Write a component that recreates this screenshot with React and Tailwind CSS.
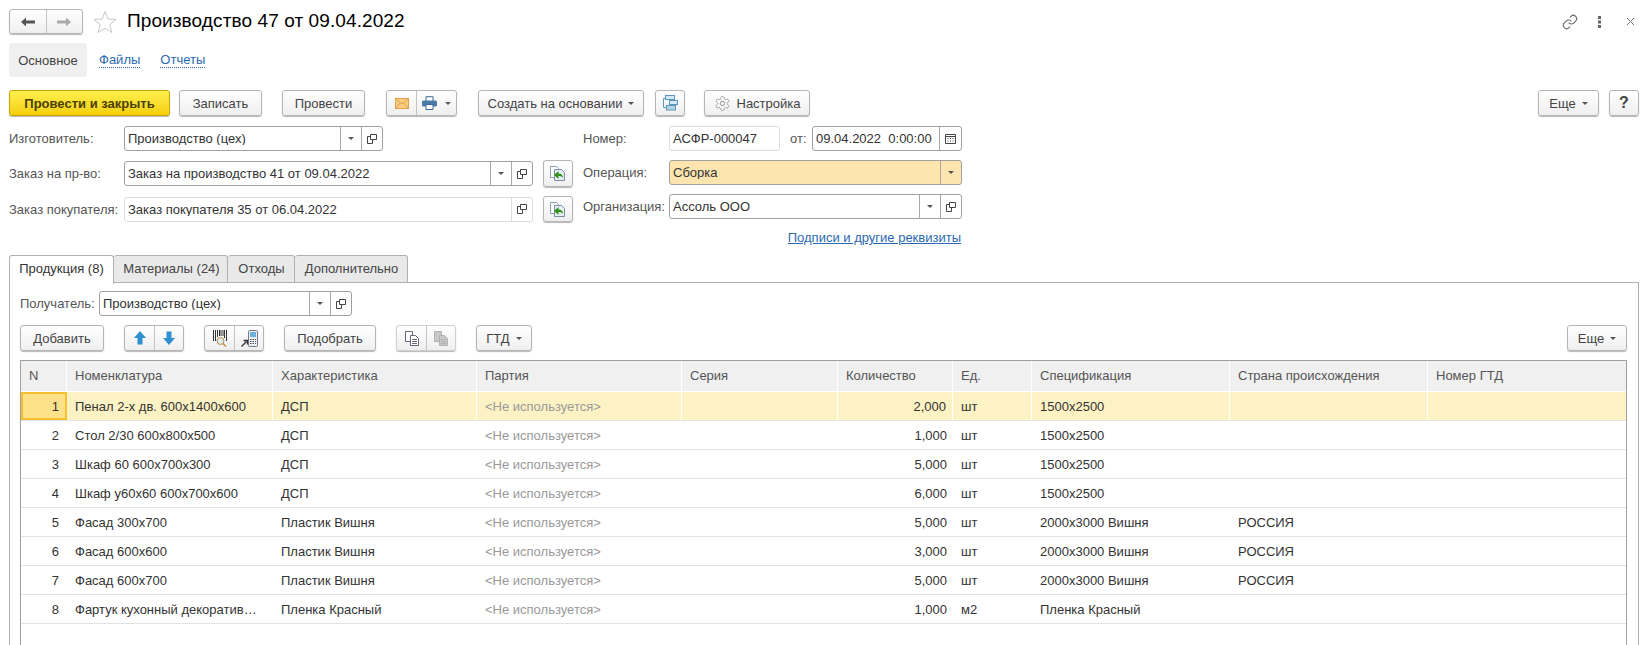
import React from "react";

const btn = "h-[26px] flex items-center justify-center rounded-[3px] border border-[#b5b5b5] bg-linear-to-b from-white to-[#efefef] shadow-[0_1px_1px_rgba(0,0,0,0.28)] text-[#444] shrink-0";

const Tri = ({ className = "" }) => (
  <svg width="6" height="3" viewBox="0 0 6 3" className={className}><path d="M0 0h6L3 3z" fill="#555" /></svg>
);
const Open = () => (
  <svg width="10" height="10" viewBox="0 0 10 10" fill="none" stroke="#444" strokeWidth="1">
    <path d="M3.500 .5h6v5h-6z" /><path d="M3.500 2.500h-3v7h5v-4" />
  </svg>
);
const TriCell = () => <div className="w-[21px] h-full flex items-center justify-center border-l border-[#a8a8a8]"><Tri /></div>;
const OpenCell = ({ light }) => <div className={`w-[21px] h-full flex items-center justify-center border-l ${light ? "border-[#dcdcdc]" : "border-[#a8a8a8]"}`}><Open /></div>;

const Cal = () => (
  <svg width="11" height="11" viewBox="0 0 11 11" fill="none" stroke="#444"><path d="M.5 1.500h10v9H.5zM.5 3.500h10" /><path d="M2.500 5.500h1M5 5.500h1M7.500 5.500h1M2.500 8h1M5 8h1M7.500 8h1" /></svg>
);
const Field = ({ w, value, tri, open, cal, light, bg }) => (
  <div className={`${w} h-[25px] flex items-center rounded-[3px] border ${light ? "border-[#dcdcdc]" : "border-[#a0a0a0]"} ${bg || "bg-white"} text-[#333] shrink-0`}>
    <div className="flex-1 pl-[3px] truncate whitespace-pre">{value}</div>
    {cal && <div className="w-[22px] h-full flex items-center justify-center border-l border-[#a8a8a8]"><Cal /></div>}
    {tri && <TriCell />}
    {open && <OpenCell light={light} />}
  </div>
);
const Doc = () => (
  <svg width="16" height="15" viewBox="0 0 16 15">
    <path d="M.5 .5h6l2 2v9h-8z" fill="#fff" stroke="#8fa0ad" />
    <path d="M4.500 3.500h7l3 3v8h-10z" fill="#e6eef3" stroke="#7d8f9e" />
    <path d="M4 9l4.500-4v2.400c3 0 4.500 1.500 4.500 4.600-1-1.500-2.300-2-4.500-2V13z" fill="#2f9417" />
  </svg>
);
const Mail = () => (
  <svg width="14" height="11" viewBox="0 0 14 11"><rect x=".5" y=".5" width="13" height="10" fill="#f8cd80" stroke="#dfa24a" /><path d="M1 1l6 5 6-5M1 10l4.500-5.500M13 10L8.500 4.500" fill="none" stroke="#dfa24a" /></svg>
);
const Print = () => (
  <svg width="15" height="14" viewBox="0 0 15 14"><path d="M4 5V.7h7V5" fill="#fff" stroke="#3d6a96" /><rect x="0" y="4.500" width="15" height="6" rx="1.500" fill="#4c7aa8" /><path d="M4 8.500h7v5H4z" fill="#fff" stroke="#3d6a96" /></svg>
);
const Struct = () => (
  <svg width="15" height="16" viewBox="0 0 15 16" fill="#d6e8f3" stroke="#5b97bd"><path d="M3 3.500H.5v9H3" fill="none" /><rect x="2.500" y=".5" width="9" height="4" /><rect x="6.500" y="5.500" width="8" height="4" /><rect x="3.500" y="10.500" width="9" height="4.500" fill="#b5d4e8" /></svg>
);
const Gear = () => (
  <svg width="17" height="17" viewBox="0 0 24 24" fill="none" stroke="#888" strokeWidth="1.300" strokeDasharray="2.500 0.600"><path d="M12.220 2h-.44a2 2 0 0 0-2 2v.18a2 2 0 0 1-1 1.730l-.43.250a2 2 0 0 1-2 0l-.15-.08a2 2 0 0 0-2.730.730l-.22.380a2 2 0 0 0 .730 2.730l.15.100a2 2 0 0 1 1 1.720v.510a2 2 0 0 1-1 1.740l-.15.090a2 2 0 0 0-.730 2.730l.22.380a2 2 0 0 0 2.730.730l.15-.08a2 2 0 0 1 2 0l.43.250a2 2 0 0 1 1 1.730V20a2 2 0 0 0 2 2h.44a2 2 0 0 0 2-2v-.18a2 2 0 0 1 1-1.730l.43-.250a2 2 0 0 1 2 0l.15.08a2 2 0 0 0 2.730-.730l.22-.390a2 2 0 0 0-.730-2.730l-.15-.08a2 2 0 0 1-1-1.740v-.5a2 2 0 0 1 1-1.740l.15-.090a2 2 0 0 0 .730-2.730l-.22-.380a2 2 0 0 0-2.730-.730l-.15.08a2 2 0 0 1-2 0l-.43-.250a2 2 0 0 1-1-1.730V4a2 2 0 0 0-2-2z" /><circle cx="12" cy="12" r="3" strokeDasharray="none" /></svg>
);
const Arrow = ({ dir }) => (
  <svg width="12" height="14" viewBox="0 0 12 14"><path d={dir === "up" ? "M6 0l6 7H8.500v6.500h-5V7H0z" : "M6 14l6-7H8.500V.5h-5V7H0z"} fill="#2f8fd0" /></svg>
);
const Barcode = () => (
  <svg width="14" height="17" viewBox="0 0 14 17"><path d="M.5 0v11M2.500 0v11M4.500 0v7M6.500 0v6M8 0v6M10 0v6M11.500 0v8M13.500 0v11" stroke="#333" strokeWidth="1" /><circle cx="7.500" cy="11" r="3.500" fill="#dceaf4" stroke="#b9914e" /><path d="M10 13.500l3 3" stroke="#c98d3c" strokeWidth="1.500" /></svg>
);
const Term = () => (
  <svg width="17" height="17" viewBox="0 0 17 17"><rect x="7.500" y=".5" width="9" height="16" rx="1" fill="#e8eef2" stroke="#778" /><rect x="9" y="2" width="6" height="5" fill="#6cb0dc" /><path d="M9 9.500h6M9 11.500h6M9 13.500h6" stroke="#555" strokeDasharray="1.500 1" /><path d="M.5 16.500l5-5M2.500 10.500h4v4" fill="none" stroke="#333" strokeWidth="1.300" /></svg>
);
const CopyI = ({ dim }) => (
  <svg width="14" height="15" viewBox="0 0 14 15" fill={dim ? "#c8c8c8" : "#fff"} stroke={dim ? "#b0b0b0" : "#667"}><path d="M.5 .5h7v10h-7z" /><path d="M5.500 4.500h5l3 3v7h-8z" /><path d="M7 8.500h5M7 10.500h5M7 12.500h5" fill="none" /></svg>
);

const cols = ["w-[46px]", "w-[206px]", "w-[204px]", "w-[205px]", "w-[156px]", "w-[115px]", "w-[79px]", "w-[198px]", "w-[198px]", "w-[198px]"];
const heads = ["N", "Номенклатура", "Характеристика", "Партия", "Серия", "Количество", "Ед.", "Спецификация", "Страна происхождения", "Номер ГТД"];
const NU = "<Не используется>";
const rows = [
  ["1", "Пенал 2-х дв. 600х1400х600", "ДСП", NU, "", "2,000", "шт", "1500х2500", "", ""],
  ["2", "Стол 2/30 600х800х500", "ДСП", NU, "", "1,000", "шт", "1500х2500", "", ""],
  ["3", "Шкаф 60 600х700х300", "ДСП", NU, "", "5,000", "шт", "1500х2500", "", ""],
  ["4", "Шкаф у60х60 600х700х600", "ДСП", NU, "", "6,000", "шт", "1500х2500", "", ""],
  ["5", "Фасад 300х700", "Пластик Вишня", NU, "", "5,000", "шт", "2000х3000 Вишня", "РОССИЯ", ""],
  ["6", "Фасад 600х600", "Пластик Вишня", NU, "", "3,000", "шт", "2000х3000 Вишня", "РОССИЯ", ""],
  ["7", "Фасад 600х700", "Пластик Вишня", NU, "", "5,000", "шт", "2000х3000 Вишня", "РОССИЯ", ""],
  ["8", "Фартук кухонный декоратив…", "Пленка Красный", NU, "", "1,000", "м2", "Пленка Красный", "", ""],
];

export default function App() {
  return (
    <div className="w-[1650px] h-[645px] overflow-hidden bg-white text-[13px] leading-none text-[#333] font-['Liberation_Sans',Arial,sans-serif] pt-[9px]">
      {/* title */}
      <div className="flex items-center h-[25px] pl-[9px]">
        <div className={`${btn} w-[74px] !h-[25px]`}>
          <div className="flex-1 flex justify-center">
            <svg width="14" height="10" viewBox="0 0 14 10"><path d="M0 5l5-4.500V3.500h9v3H5v3z" fill="#555" /></svg>
          </div>
          <div className="w-px h-full bg-[#c4c4c4]" />
          <div className="flex-1 flex justify-center">
            <svg width="14" height="10" viewBox="0 0 14 10"><path d="M14 5L9 .5V3.500H0v3h9v3z" fill="#aaa" /></svg>
          </div>
        </div>
        <svg width="24" height="23" viewBox="0 0 24 23" className="ml-[10px]" fill="none" stroke="#c8c8c8"><path d="M12 1.500l3 7.500 8 .6-6.200 5.100 2 7.800L12 18.200 5.200 22.500l2-7.800L1 9.600 9 9z" /></svg>
        <div className="ml-[10px] pb-[2px] text-[19px] tracking-[0.1px] text-black">Производство 47 от 09.04.2022</div>
        <div className="ml-auto flex items-center pr-[15px]">
          <svg width="16" height="16" viewBox="0 0 24 24" fill="none" stroke="#666" strokeWidth="1.600"><path d="M10 13a5 5 0 0 0 7.540.54l3-3a5 5 0 0 0-7.070-7.070l-1.720 1.710" /><path d="M14 11a5 5 0 0 0-7.540-.54l-3 3a5 5 0 0 0 7.070 7.070l1.710-1.710" /></svg>
          <svg width="4" height="12" viewBox="0 0 4 12" className="ml-[20px]" fill="#666"><rect x="0" y="0" width="3" height="3" /><rect x="0" y="4.500" width="3" height="3" /><rect x="0" y="9" width="3" height="3" /></svg>
          <svg width="9" height="9" viewBox="0 0 9 9" className="ml-[24px]" stroke="#777" fill="none"><path d="M1 1l7 7M8 1L1 8" /></svg>
        </div>
      </div>

      {/* sections */}
      <div className="flex items-center h-[34px] mt-[9px] pl-[9px]">
        <div className="w-[78px] h-full rounded-[3px] bg-[#f0f0f0] flex items-center justify-center text-[#444]">Основное</div>
        <div className="ml-[12px] text-[#2a6ab0] border-b border-dotted border-[#2a6ab0] pb-[1px]">Файлы</div>
        <div className="ml-[20px] text-[#2a6ab0] border-b border-dotted border-[#2a6ab0] pb-[1px]">Отчеты</div>
      </div>

      {/* command bar */}
      <div className="flex items-center h-[26px] mt-[13px] pl-[9px] pr-[11px]">
        <div className={`${btn} w-[161px] !border-[#c9a400] !from-[#fff04a] !to-[#f5cf00] font-bold !text-[#4a4000]`}>Провести и закрыть</div>
        <div className={`${btn} w-[83px] ml-[9px]`}>Записать</div>
        <div className={`${btn} w-[83px] ml-[20px]`}>Провести</div>
        <div className={`${btn} w-[71px] ml-[21px]`}>
          <div className="w-[30px] flex justify-center border-r border-[#c4c4c4] h-full items-center"><Mail /></div>
          <div className="flex-1 flex justify-center items-center gap-[8px]"><Print /><Tri /></div>
        </div>
        <div className={`${btn} w-[166px] ml-[21px] gap-[6px]`}>Создать на основании<Tri /></div>
        <div className={`${btn} w-[30px] ml-[11px]`}><Struct /></div>
        <div className={`${btn} w-[106px] ml-[19px] gap-[6px]`}><Gear />Настройка</div>
        <div className={`${btn} w-[61px] ml-auto gap-[6px]`}>Еще<Tri /></div>
        <div className={`${btn} w-[30px] ml-[10px] text-[16px] font-bold`}>?</div>
      </div>

      {/* form */}
      <div className="flex h-[129px] mt-[10px] pl-[9px]">
        <div className="w-[564px]">
          <div className="flex items-center"><div className="w-[115px] shrink-0 text-[#555]">Изготовитель:</div><Field w="w-[259px]" value="Производство (цех)" tri open /></div>
          <div className="flex items-center mt-[9px]">
            <div className="w-[115px] shrink-0 text-[#555]">Заказ на пр-во:</div>
            <Field w="w-[409px]" value="Заказ на производство 41 от 09.04.2022" tri open />
            <div className={`${btn} w-[30px] ml-[10px] !h-[27px]`}><Doc /></div>
          </div>
          <div className="flex items-center mt-[9px]">
            <div className="w-[115px] shrink-0 text-[#555]">Заказ покупателя:</div>
            <Field w="w-[409px]" value="Заказ покупателя 35 от 06.04.2022" open light />
            <div className={`${btn} w-[30px] ml-[10px]`}><Doc /></div>
          </div>
        </div>
        <div className="w-[379px] ml-[10px]">
          <div className="flex items-center">
            <div className="w-[86px] shrink-0 text-[#555]">Номер:</div>
            <Field w="w-[111px]" value="АСФР-000047" light />
            <div className="w-[32px] text-[#555] pl-[10px]">от:</div>
            <Field w="w-[150px]" value="09.04.2022  0:00:00" cal />
          </div>
          <div className="flex items-center mt-[9px]">
            <div className="w-[86px] shrink-0 text-[#555]">Операция:</div>
            <Field w="w-[293px]" value="Сборка" tri bg="bg-[#fee5b0]" />
          </div>
          <div className="flex items-center mt-[9px]">
            <div className="w-[86px] shrink-0 text-[#555]">Организация:</div>
            <Field w="w-[293px]" value="Ассоль ООО" tri open />
          </div>
          <div className="mt-[12px] pr-[1px] text-right text-[#2a6ab0]"><span className="underline">Подписи и другие реквизиты</span></div>
        </div>
      </div>

      {/* tabs */}
      <div className="flex h-[28px] ml-[9px] relative z-10">
        <div className="w-[105px] h-[29px] pb-[3px] bg-white border border-b-0 border-[#b0b0b0] rounded-t-[3px] flex items-center justify-center text-[#333]">Продукция (8)</div>
        <div className="w-[114px] h-[28px] pb-[1px] pl-[2px] bg-[#e9e9e9] border border-l-0 border-[#b0b0b0] rounded-t-[3px] flex items-center justify-center text-[#444]">Материалы (24)</div>
        <div className="w-[67px] h-[28px] pb-[1px] pl-[1px] bg-[#e9e9e9] border border-l-0 border-[#b0b0b0] rounded-t-[3px] flex items-center justify-center text-[#444]">Отходы</div>
        <div className="w-[113px] h-[28px] pb-[1px] pl-[1px] bg-[#e9e9e9] border border-l-0 border-[#b0b0b0] rounded-t-[3px] flex items-center justify-center text-[#444]">Дополнительно</div>
      </div>

      <div className="ml-[9px] w-[1630px] h-[400px] border border-b-0 border-[#b0b0b0] -mt-px pl-[10px] pr-[11px]">
        <div className="flex items-center mt-[8px]">
          <div className="w-[79px] shrink-0 text-[#555]">Получатель:</div>
          <Field w="w-[253px]" value="Производство (цех)" tri open />
        </div>
        <div className="flex items-center h-[26px] mt-[9px]">
          <div className={`${btn} w-[84px]`}>Добавить</div>
          <div className={`${btn} w-[60px] ml-[20px]`}>
            <div className="w-[30px] h-full flex items-center justify-center border-r border-[#c4c4c4]"><Arrow dir="up" /></div>
            <div className="flex-1 flex justify-center"><Arrow dir="down" /></div>
          </div>
          <div className={`${btn} w-[60px] ml-[20px]`}>
            <div className="w-[30px] h-full flex items-center justify-center border-r border-[#c4c4c4]"><Barcode /></div>
            <div className="flex-1 flex justify-center"><Term /></div>
          </div>
          <div className={`${btn} w-[92px] ml-[20px]`}>Подобрать</div>
          <div className={`${btn} w-[60px] ml-[20px] !border-[#cfcfcf]`}>
            <div className="w-[30px] h-full flex items-center justify-center border-r border-[#c4c4c4]"><CopyI /></div>
            <div className="flex-1 h-full flex items-center justify-center"><CopyI dim /></div>
          </div>
          <div className={`${btn} w-[56px] ml-[20px] gap-[6px]`}>ГТД<Tri /></div>
          <div className={`${btn} w-[60px] ml-auto gap-[6px]`}>Еще<Tri /></div>
        </div>

        <div className="mt-[9px] border-x border-t border-[#a0a0a0] h-[300px]">
          <div className="flex h-[30px] bg-[#f0f0f0]">
            {heads.map((h, i) => (
              <div key={h} className={`${cols[i]} h-full pb-[1px] flex items-center pl-[8px] text-[#555] border-r border-white shrink-0 ${i === 9 ? "border-r-0" : ""}`}>{h}</div>
            ))}
          </div>
          {rows.map((r, ri) => (
            <div key={ri} className={`flex h-[29px] border-t ${ri === 0 ? "border-white" : "border-[#e2e2e2]"} ${ri === 0 ? "bg-[#fdf2c4]" : "bg-white"} ${ri === 7 ? "h-[30px] border-b" : ""}`}>
              {r.map((c, i) => {
                const cur = ri === 0 && i === 0;
                const gray = i === 3;
                return (
                  <div
                    key={i}
                    className={`${cols[i]} shrink-0 h-full flex items-center min-w-0 ${i === 0 ? "justify-end pr-[8px]" : i === 5 ? "justify-end pr-[6px]" : "pl-[8px] pr-[6px]"} ${gray ? "text-[#999]" : "text-[#333]"} ${ri === 0 && i !== 9 ? "border-r border-white" : ""} ${cur ? "!border-2 !border-[#f5c02f] bg-[#fde28a] !pr-[6px]" : ""}`}
                  >
                    {c}
                  </div>
                );
              })}
            </div>
          ))}
        </div>
      </div>
    </div>
  );
}
